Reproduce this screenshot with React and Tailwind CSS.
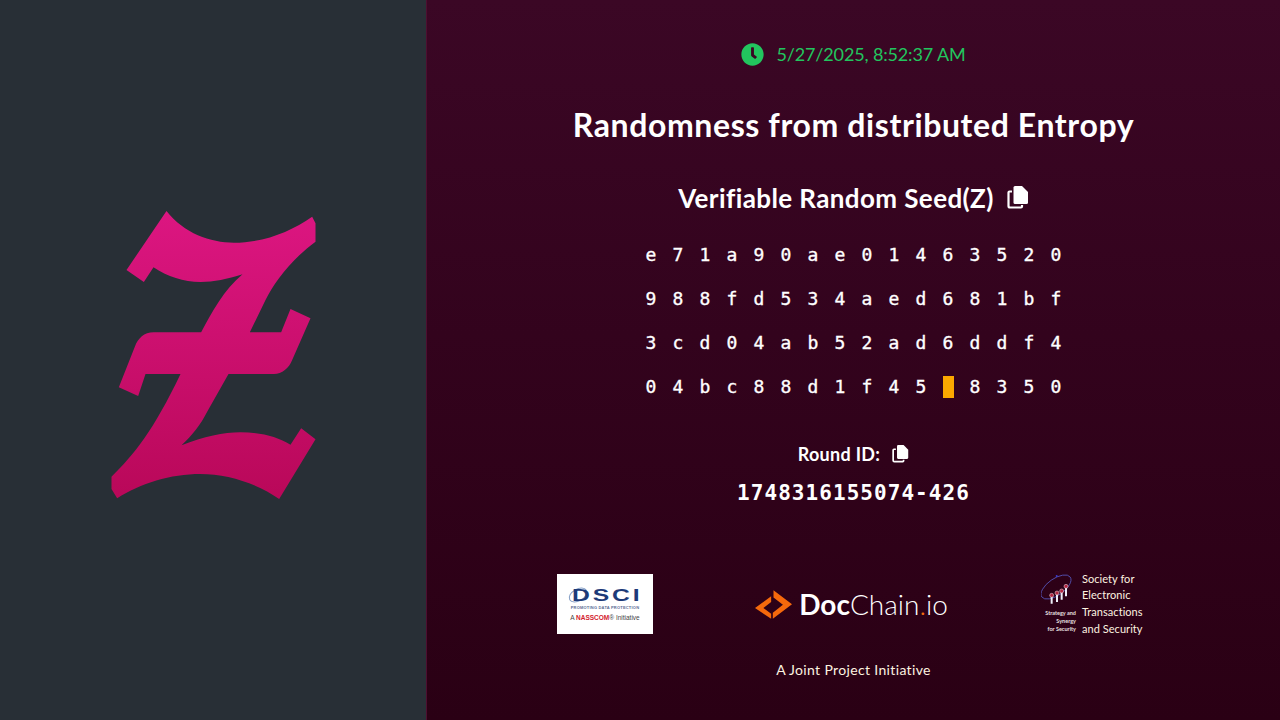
import React from 'react';
import { FaClock } from 'react-icons/fa';

const rows = [
  'e71a90ae01463520'.split(''),
  '988fd534aed681bf'.split(''),
  '3cd04ab52ad6ddf4'.split(''),
  '04bc88d1f45_8350'.split(''),
];

function CopyIcon({ className }) {
  return (
    <svg viewBox="0 0 22 24" className={className} fill="none">
      <path d="M5 6.500H2.500a1 1 0 0 0-1 1V21a1.500 1.500 0 0 0 1.500 1.500H14a1 1 0 0 0 1-1V20" stroke="currentColor" strokeWidth="2.200" />
      <path d="M8 1h7l6 6v10.500a1.500 1.500 0 0 1-1.500 1.500H8a1.500 1.500 0 0 1-1.500-1.500v-15A1.500 1.500 0 0 1 8 1z" fill="currentColor" />
    </svg>
  );
}

function ZLogo() {
  return (
    <svg viewBox="63 63 612 864" className="w-[205px] h-[288px]">
      <defs>
        <linearGradient id="zfill" x1="0" y1="0" x2="0" y2="1">
          <stop offset="0" stopColor="#dc1681" />
          <stop offset="1" stopColor="#b90859" />
        </linearGradient>
      </defs>
      <path
        fill="url(#zfill)"
        d="M228 63C280 130 360 158 430 158C520 158 600 125 665 80L675 100L675 155C600 210 550 280 525 330L478 427L572 427L600 357L660 385L605 510C595 535 575 552 550 552L414 552L350 665C330 705 305 735 273 766C340 740 400 727 450 727C510 727 560 740 600 764L632 715L675 748L566 927C500 880 410 852 330 852C240 852 150 880 80 925L63 897L63 860C130 795 190 720 270 552L165 552L143 618L85 592L133 470C143 445 160 427 190 427L332 427C365 365 400 300 456 253C410 268 370 276 330 276C280 276 230 260 189 232L160 276L108 240Z"
      />
    </svg>
  );
}

function DsciLogo() {
  return (
    <div className="w-[96px] h-[60px] bg-white flex flex-col items-center pt-[14px] shrink-0 font-['Liberation_Sans',sans-serif]">
      <div className="relative h-[14px] w-[72px] flex items-center">
        <svg viewBox="0 0 30 24" className="absolute left-[-2px] top-[-3px] w-[22px] h-[20px]" fill="none">
          <ellipse cx="15" cy="12" rx="13" ry="8" stroke="#8aa3c8" strokeWidth="1.500" transform="rotate(-30 15 12)" />
        </svg>
        <span className="relative ml-[3px] text-[17px] leading-none font-bold tracking-[2px] text-[#1d3a78] whitespace-nowrap origin-left scale-x-[1.45]">DSCI</span>
      </div>
      <div className="text-[4px] leading-[5px] mt-[3px] font-bold tracking-[0.2px] text-[#5a6c94] whitespace-nowrap">PROMOTING DATA PROTECTION</div>
      <div className="text-[6.500px] leading-[8px] mt-[4px] text-[#444] whitespace-nowrap">
        A <span className="font-bold text-[#d3202c]">NASSCOM</span>
        <span className="text-[#444]">® Initiative</span>
      </div>
    </div>
  );
}

function DocChainLogo() {
  return (
    <div className="flex items-center shrink-0 ml-[9px]">
      <svg viewBox="12 15 110 85" className="w-[37px] h-[29px] mr-[7px]">
        <path d="M67 15L122 57L65 100L65 82L95 58L67 37Z" fill="#f5690c" />
        <path d="M60 33L60 50L37 68L60 85L60 100L12 68Z" fill="#f5690c" />
      </svg>
      <span className="text-[28px] leading-none text-white font-['Lato',sans-serif]">
        <span className="font-bold">Doc</span>
        <span className="font-light">Chain</span>
        <span className="font-light text-[#f26a0f]">.</span>
        <span className="font-light">io</span>
      </span>
    </div>
  );
}

function SetsLogo() {
  return (
    <div className="flex items-start shrink-0 w-[102px]">
      <div className="w-[35px] flex flex-col items-end shrink-0 mt-[1px]">
        <svg viewBox="15 5 105 99" className="w-[35px] h-[33px]" fill="none">
          <ellipse cx="60" cy="50" rx="52" ry="25" stroke="#5453b5" strokeWidth="2.500" transform="rotate(-35 60 50)" />
          <circle cx="62" cy="17" r="3" fill="#3a3ad0" />
          <path d="M47 75v25M63 68v27M77 62v26M90 48v30" stroke="#eeeef8" strokeWidth="6" />
          <circle cx="47" cy="75" r="6" fill="#b32540" stroke="#e8e0e8" strokeWidth="1.500" />
          <circle cx="63" cy="68" r="6" fill="#b32540" stroke="#e8e0e8" strokeWidth="1.500" />
          <circle cx="77" cy="62" r="6" fill="#b32540" stroke="#e8e0e8" strokeWidth="1.500" />
          <circle cx="90" cy="48" r="6" fill="#b32540" stroke="#e8e0e8" strokeWidth="1.500" />
        </svg>
        <div className="text-[5.500px] leading-[8px] text-right text-[#e8e0e0] font-bold mt-[4px] whitespace-nowrap">
          <div>Strategy and</div>
          <div>Synergy</div>
          <div>for Security</div>
        </div>
      </div>
      <div className="ml-[6px] text-[11px] leading-[16.700px] tracking-[0.05px] text-[#fdf3e0] whitespace-nowrap">
        <div>Society for</div>
        <div>Electronic</div>
        <div>Transactions</div>
        <div>and Security</div>
      </div>
    </div>
  );
}

export default function App() {
  return (
    <div className="h-[720px] w-[1280px] flex overflow-hidden font-['Lato','Open_Sans',sans-serif]">
      <div className="w-[426px] shrink-0 bg-[#282f36] flex items-center justify-center pb-[11px]">
        <ZLogo />
      </div>
      <div className="flex-1 border-l border-[#4d0f30] bg-gradient-to-b from-[#3b0725] to-[#2a0014] flex flex-col items-center text-white">
        <div className="mt-[42px] h-[24px] flex items-center text-[#22c55e] text-[18px] leading-none tracking-[-0.15px]">
          <FaClock className="w-[23px] h-[23px] mr-[12px]" />
          <span>5/27/2025, 8:52:37 AM</span>
        </div>

        <h1 className="mt-[39px] h-[40px] text-[32px] leading-[40px] font-bold tracking-[0.6px] whitespace-nowrap">Randomness from distributed Entropy</h1>

        <div className="mt-[38px] h-[30px] flex items-center">
          <span className="text-[26px] leading-[30px] font-bold tracking-[0.4px] whitespace-nowrap">Verifiable Random Seed(Z)</span>
          <CopyIcon className="w-[22px] h-[24px] ml-[13px] mb-[3px]" />
        </div>

        <div className="mt-[31px] flex flex-col gap-[22px] font-['DejaVu_Sans_Mono',monospace] font-normal text-[18px] leading-[22px] [-webkit-text-stroke:0.35px_white]">
          {rows.map((row, i) => (
            <div key={i} className="flex">
              {row.map((c, j) => (
                <div key={j} className="w-[27px] h-[22px] flex items-center justify-center">
                  {c === '_' ? <div className="w-[11px] h-[22px] bg-[#fba800]" /> : c}
                </div>
              ))}
            </div>
          ))}
        </div>

        <div className="mt-[44px] h-[24px] flex items-center">
          <span className="text-[18px] leading-[24px] font-bold tracking-[0.3px]">Round ID:</span>
          <CopyIcon className="w-[17px] h-[19px] ml-[12px] mb-[2px]" />
        </div>

        <div className="mt-[14px] h-[26px] font-['DejaVu_Sans_Mono',monospace] font-bold text-[21px] leading-[26px] tracking-[1.05px]">1748316155074-426</div>

        <div className="mt-[64px] mr-[7px] w-[586px] h-[68px] flex items-center justify-between">
          <DsciLogo />
          <DocChainLogo />
          <SetsLogo />
        </div>

        <div className="mt-[22px] text-[14px] leading-[20px] text-[#fdf3e0] tracking-[0.35px]">A Joint Project Initiative</div>
      </div>
    </div>
  );
}
